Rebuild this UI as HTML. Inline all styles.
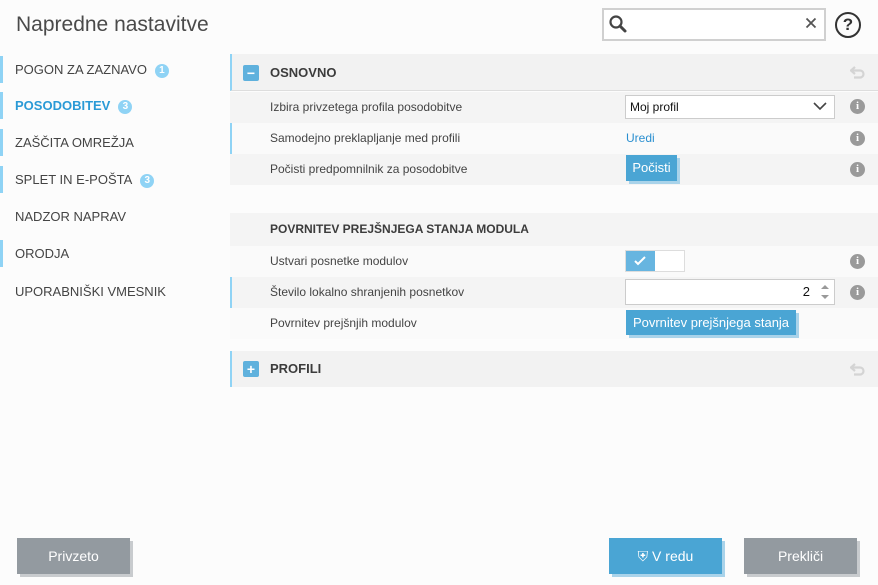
<!DOCTYPE html>
<html><head><meta charset="utf-8"><style>
*{margin:0;padding:0;box-sizing:border-box}
body{width:878px;height:585px;background:#fcfcfc;font-family:"Segoe UI","Liberation Sans",sans-serif;color:#3c3c3c;position:relative;overflow:hidden;font-size:12px}
.a{position:absolute}
h1{position:absolute;left:16px;top:13px;font-size:21px;font-weight:normal;color:#4a4a4a}
.nav{left:0;width:220px;height:27px;padding-left:15px;line-height:27px;font-size:13px;color:#444}
.nav.bar{border-left:3px solid #8fd3f5;padding-left:12px}
.badge{display:inline-block;width:14px;height:14px;border-radius:7px;background:#8fd3f5;color:#fff;font-size:10px;line-height:14px;text-align:center;font-weight:bold;margin-left:8px;vertical-align:1px}
.row{left:230px;width:648px;height:31px;line-height:31px;padding-left:40px;font-size:12px;color:#444}
.g{background:#f4f4f4}.w{background:#fafafa}
.lb{border-left:2px solid #8fd3f5;padding-left:38px}
.info{position:absolute;left:850px;width:15px;height:15px;border-radius:8px;background:#9a9a9a;color:#fff;font:bold 11px/15px "Liberation Serif",serif;text-align:center}
.btn{background:#4aa5d4;color:#fff;box-shadow:3px 3px 0 #a9d3ea;font-size:13px;text-align:center}
.gbtn{background:#939aa0;color:#fff;box-shadow:3px 3px 0 #c8cbce;font-size:14px;text-align:center;line-height:36px}
.hd{left:230px;width:648px;background:#f2f2f2;font-weight:bold;font-size:13px;color:#3c3c3c;padding-left:40px}
.sq{position:absolute;left:13px;top:11px;width:16px;height:16px;background:#5fb1dd;border-radius:2px;color:#fff;font:bold 14px/16px "Liberation Sans";text-align:center}
</style></head><body>
<h1>Napredne nastavitve</h1>
<div class="a" style="left:602px;top:8px;width:224px;height:33px;border:2px solid #d0d0d0;background:#fff"></div>
<svg class="a" style="left:608px;top:14px" width="20" height="20"><circle cx="8" cy="8" r="5.5" fill="none" stroke="#444" stroke-width="2.2"/><path d="M12 12l5 5" stroke="#444" stroke-width="3" stroke-linecap="round"/></svg>
<svg class="a" style="left:805px;top:17px" width="12" height="12"><path d="M1.5 1.5l9 9M10.5 1.5l-9 9" stroke="#555" stroke-width="1.8"/></svg>
<div class="a" style="left:835px;top:12px;width:26px;height:26px;border:2px solid #333;border-radius:13px;text-align:center;font:bold 17px/22px 'Liberation Sans';color:#333">?</div>

<div class="a nav bar" style="top:56px">POGON ZA ZAZNAVO<span class="badge">1</span></div>
<div class="a nav bar" style="top:92px;color:#2a9ad6;font-weight:bold">POSODOBITEV<span class="badge">3</span></div>
<div class="a nav bar" style="top:129px">ZAŠČITA OMREŽJA</div>
<div class="a nav bar" style="top:166px">SPLET IN E-POŠTA<span class="badge">3</span></div>
<div class="a nav" style="top:203px">NADZOR NAPRAV</div>
<div class="a nav bar" style="top:240px">ORODJA</div>
<div class="a nav" style="top:278px">UPORABNIŠKI VMESNIK</div>

<div class="a hd" style="top:54px;height:37px;line-height:37px;border-left:2px solid #8fd3f5;padding-left:38px;border-bottom:1px solid #ddd"><div class="sq" style="left:11px">−</div>OSNOVNO</div>
<svg class="a" style="left:850px;top:66px" width="16" height="13"><path d="M5 1L1 4.5 5 8" fill="none" stroke="#d4d4d4" stroke-width="2.2"/><path d="M2 4.5h8a3.5 3.5 0 0 1 0 7H4" fill="none" stroke="#d4d4d4" stroke-width="2.2"/></svg>
<div class="a row g" style="top:92px">Izbira privzetega profila posodobitve</div>
<div class="a" style="left:625px;top:95px;width:210px;height:24px;border:1px solid #ccc;background:#fff;font-size:12px;line-height:22px;padding-left:4px;color:#111">Moj profil</div>
<svg class="a" style="left:813px;top:101px" width="14" height="10"><path d="M1 2l6 6 6-6" fill="none" stroke="#444" stroke-width="1.6"/></svg>
<div class="info" style="top:99px">i</div>
<div class="a row w lb" style="top:123px">Samodejno preklapljanje med profili</div>
<div class="a" style="left:626px;top:123px;line-height:31px;color:#2a8fd0">Uredi</div>
<div class="info" style="top:131px">i</div>
<div class="a row g" style="top:154px">Počisti predpomnilnik za posodobitve</div>
<div class="a btn" style="left:626px;top:155px;width:51px;height:26px;line-height:26px">Počisti</div>
<div class="info" style="top:162px">i</div>

<div class="a hd" style="top:213px;height:33px;line-height:33px;background:#f4f4f4;font-size:12px">POVRNITEV PREJŠNJEGA STANJA MODULA</div>
<div class="a row w" style="top:246px">Ustvari posnetke modulov</div>
<div class="a" style="left:625px;top:250px;width:60px;height:22px;border:1px solid #ddd;background:#fff"></div>
<div class="a" style="left:626px;top:251px;width:29px;height:20px;background:#67b5e0"></div>
<svg class="a" style="left:633px;top:255px" width="14" height="12"><path d="M2 6l3 3 7-7" fill="none" stroke="#fff" stroke-width="2"/></svg>
<div class="info" style="top:254px">i</div>
<div class="a row g lb" style="top:277px">Število lokalno shranjenih posnetkov</div>
<div class="a" style="left:625px;top:279px;width:210px;height:26px;border:1px solid #ccc;background:#fff;text-align:right;padding-right:24px;line-height:24px;font-size:13px;color:#111">2</div>
<svg class="a" style="left:819px;top:283px" width="12" height="18"><path d="M2 6l4-4 4 4z M2 12l4 4 4-4z" fill="#999"/></svg>
<div class="info" style="top:285px">i</div>
<div class="a row w" style="top:308px">Povrnitev prejšnjih modulov</div>
<div class="a btn" style="left:626px;top:310px;width:170px;height:25px;line-height:25px">Povrnitev prejšnjega stanja</div>

<div class="a hd" style="top:351px;height:36px;line-height:36px;border-left:2px solid #8fd3f5;padding-left:38px"><div class="sq" style="left:11px;top:10px">+</div>PROFILI</div>
<svg class="a" style="left:850px;top:363px" width="16" height="13"><path d="M5 1L1 4.5 5 8" fill="none" stroke="#d4d4d4" stroke-width="2.2"/><path d="M2 4.5h8a3.5 3.5 0 0 1 0 7H4" fill="none" stroke="#d4d4d4" stroke-width="2.2"/></svg>

<div class="a gbtn" style="left:17px;top:538px;width:113px;height:36px">Privzeto</div>
<div class="a btn" style="left:609px;top:538px;width:113px;height:36px;line-height:36px;font-size:14px">⛨ V redu</div>
<div class="a gbtn" style="left:744px;top:538px;width:113px;height:36px">Prekliči</div>
</body></html>
